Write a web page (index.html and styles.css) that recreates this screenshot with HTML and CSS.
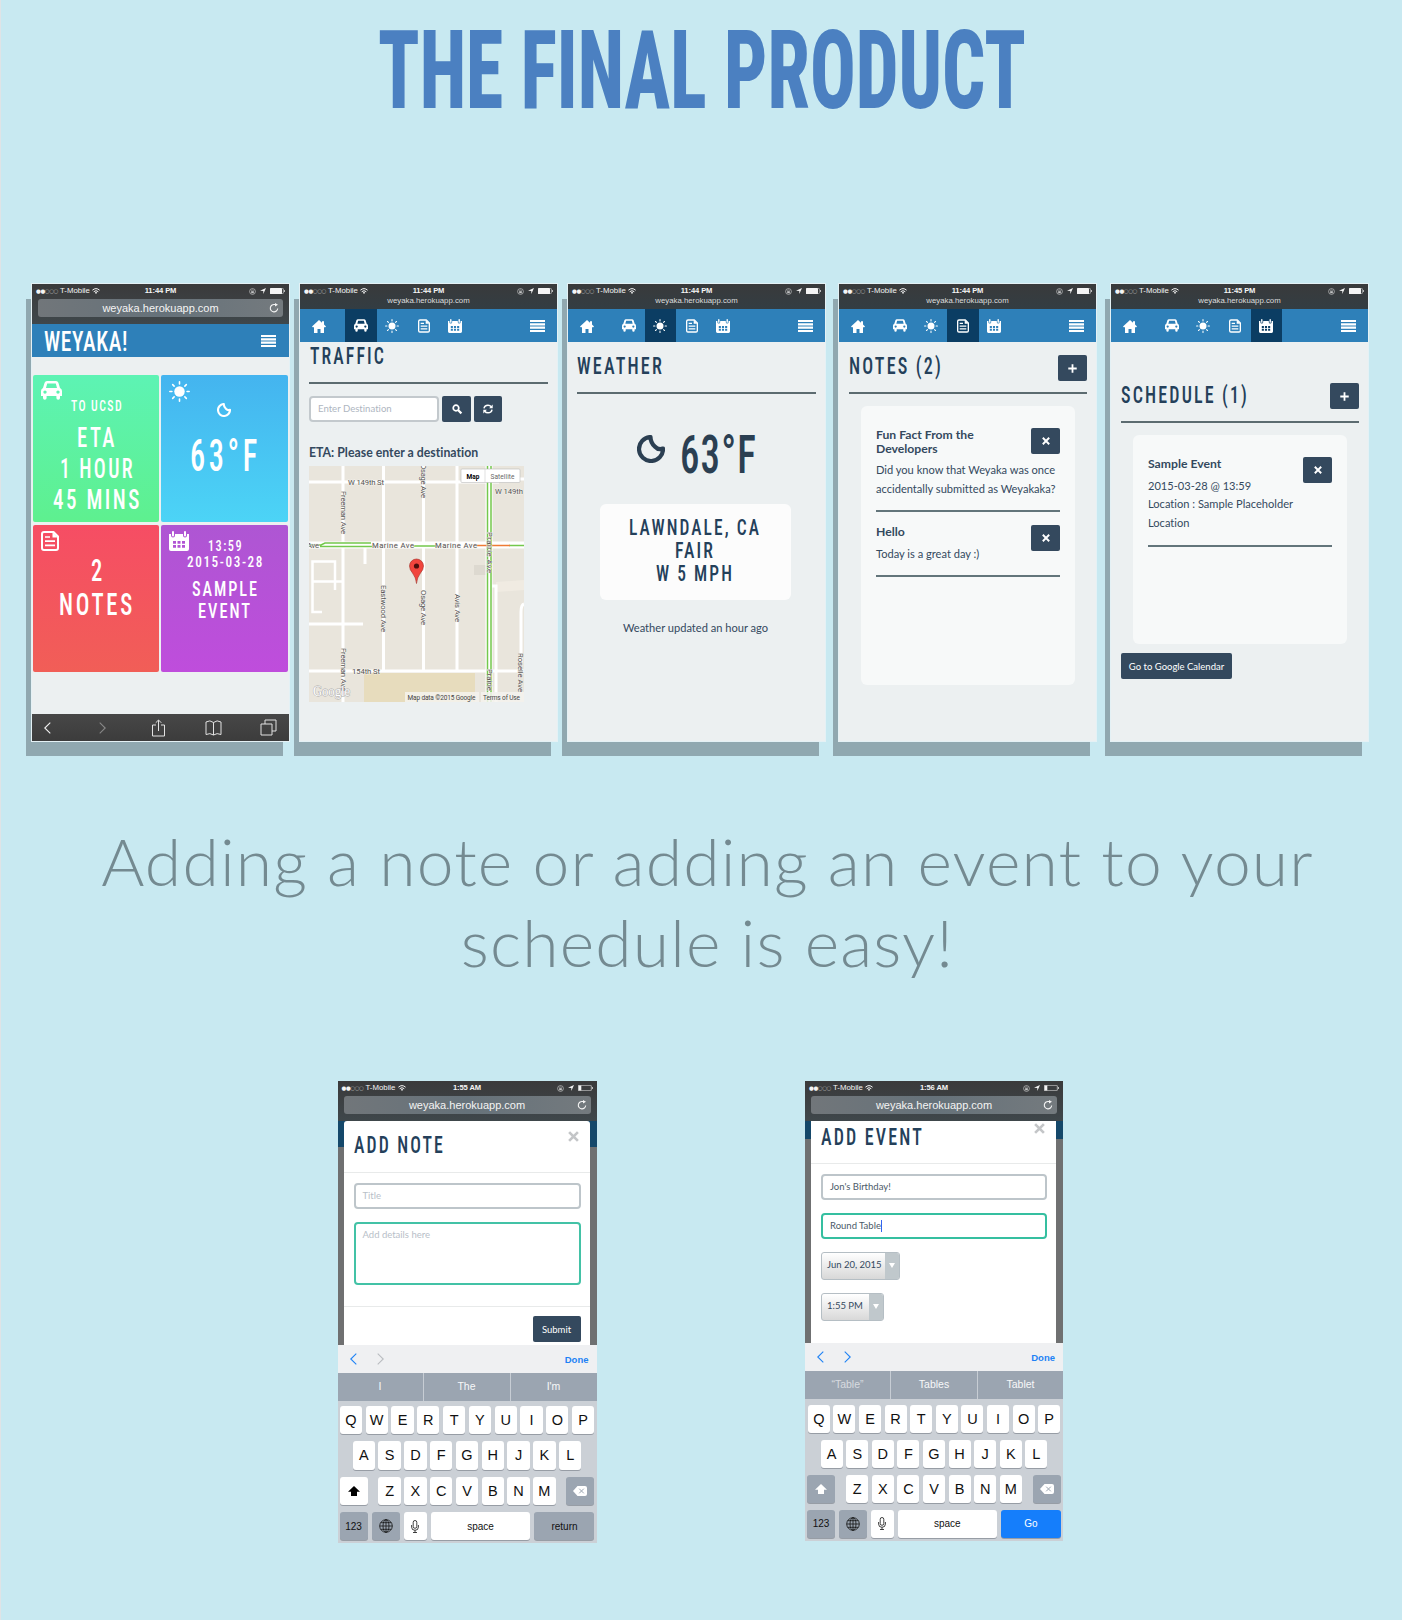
FILE: index.html
```html
<!DOCTYPE html>
<html lang="en">
<head>
<meta charset="utf-8">
<title>Weyaka – The Final Product</title>
<link rel="stylesheet" href="styles.css">
</head>
<body>
<svg class="defs" aria-hidden="true">
  <symbol id="car" viewBox="0 0 21 19"><path fill-rule="evenodd" d="M6 0h9q1.8 0 2.400 1.800L19 7q2 1 2 3v5h-2v2q0 1.800-1.800 1.800T15.400 17v-2H5.600v2q0 1.800-1.800 1.800T2 17v-2H0v-5q0-2 2-3L3.600 1.800Q4.200 0 6 0ZM6.200 2.500 5 7h11l-1.200-4.500ZM4 9.400a1.700 1.700 0 1 0 0 3.400 1.700 1.700 0 0 0 0-3.400Zm13 0a1.700 1.700 0 1 0 0 3.400 1.700 1.700 0 0 0 0-3.400Z"/></symbol>
  <symbol id="sun" viewBox="0 0 20 20"><circle cx="10" cy="10" r="5"/><path fill="none" stroke="currentColor" stroke-width="1.500" stroke-linecap="round" d="M10 .8v2M10 17.200v2M.8 10h2M17.200 10h2M3.500 3.500l1.400 1.400M15.100 15.100l1.400 1.400M3.500 16.500l1.400-1.400M15.100 4.900l1.400-1.400"/></symbol>
  <symbol id="note" viewBox="0 0 18 20"><path fill="none" stroke="currentColor" stroke-width="2" stroke-linejoin="round" d="M3 1h9.500L17 5.500V17q0 2-2 2H3q-2 0-2-2V3q0-2 2-2Z"/><path d="M11.500 1v5.500H17Z"/><path fill="none" stroke="currentColor" stroke-width="1.700" d="M4 6h5M4 10.200h10M4 14.400h10"/></symbol>
  <symbol id="cal" viewBox="0 0 20 20"><path fill-rule="evenodd" d="M0 3h2v1.500q0 2 2 2t2-2V3h8v1.500q0 2 2 2t2-2V3h2v15q0 2-2 2H2q-2 0-2-2ZM4 10v2.800h3V10Zm4.500 0v2.800h3V10ZM13 10v2.800h3V10Zm-9 4v2.800h3V14Zm4.500 0v2.800h3V14Zm4.500 0v2.800h3V14Z"/><rect x="3" width="2" height="5.500" rx="1"/><rect x="15" width="2" height="5.500" rx="1"/></symbol>
  <symbol id="home" viewBox="0 0 14 13"><path d="M7 0l3 2.700V1.300h2v3.200l2 1.900-.7.900H12V13H8.500V9h-3v4H2V7.300H.7L0 6.400Z"/></symbol>
  <symbol id="menu" viewBox="0 0 15 12"><path d="M0 0h15v2.100H0ZM0 3.300h15v2.100H0ZM0 6.600h15v2.100H0ZM0 9.900h15V12H0Z"/></symbol>
  <symbol id="moon" viewBox="0 0 28 28"><path fill="none" stroke="currentColor" stroke-width="4.200" stroke-linejoin="round" d="M13.500 2A12 12 0 1 0 26 13.500Q21.500 15.500 17.800 11.500 13.500 7.500 13.500 2Z"/></symbol>
  <symbol id="wifi" viewBox="0 0 8 6"><path d="M4 6 2.800 4.600q1.200-1 2.400 0Z"/><path fill="none" stroke="currentColor" stroke-width="1" d="M.4 2.200q3.600-3.200 7.200 0M1.700 3.700q2.300-2 4.600 0"/></symbol>
  <symbol id="lock" viewBox="0 0 7 7"><circle cx="3.500" cy="3.500" r="2.900" fill="none" stroke="currentColor" stroke-width=".7"/><path d="M2.200 3.200h2.600v2H2.200Z"/><path fill="none" stroke="currentColor" stroke-width=".5" d="M2.700 3.200V2.300q.8-.9 1.600 0v.9"/></symbol>
  <symbol id="loc" viewBox="0 0 6 6"><path d="M6 0 3.300 6V2.900L0 2.700Z"/></symbol>
  <symbol id="full" viewBox="0 0 15 6"><rect x="0" y="0" width="12" height="6" rx=".6"/><path fill="none" stroke="currentColor" stroke-width=".5" d="M12 .4h.7q.7 0 .7.700v3.800q0 .700-.7.700H12"/><path d="M14 2h.7v2H14Z"/></symbol>
  <symbol id="low" viewBox="0 0 15 6"><rect x=".3" y=".3" width="13" height="5.400" rx=".7" fill="none" stroke="currentColor" stroke-width=".6"/><rect x=".5" y=".5" width="2.800" height="5"/><path d="M14 2h.7v2H14Z"/></symbol>
  <symbol id="reload" viewBox="0 0 10 10"><path fill="none" stroke="currentColor" stroke-width="1.100" d="M8.700 5.500A3.700 3.700 0 1 1 5.500 1.500h2"/><path d="M6 0l3 1.700L6 3.500Z"/></symbol>
  <symbol id="x" viewBox="0 0 10 10"><path fill="none" stroke="currentColor" stroke-width="2.400" d="M1 1l8 8M9 1 1 9"/></symbol>
  <symbol id="plus" viewBox="0 0 10 10"><path fill="none" stroke="currentColor" stroke-width="2" d="M5 .3v9.400M.3 5h9.400"/></symbol>
  <symbol id="left" viewBox="0 0 7 12"><path fill="none" stroke="currentColor" stroke-width="1.100" d="M6.300.7.800 6l5.500 5.300"/></symbol>
  <symbol id="right" viewBox="0 0 7 12"><path fill="none" stroke="currentColor" stroke-width="1.100" d="M.7.700 6.200 6 .7 11.300"/></symbol>
  <symbol id="shift" viewBox="0 0 12 10"><path d="M6 0l6 5.700H9V10H3V5.700H0Z"/></symbol>
  <symbol id="del" viewBox="0 0 14 10"><path fill="#fff" d="M4.500 0H12q2 0 2 2v6q0 2-2 2H4.500L0 5Z"/><path fill="none" stroke="#9ba5b1" d="M6.200 2.700l4.600 4.600M10.800 2.700 6.200 7.300"/></symbol>
  <symbol id="globe" viewBox="0 0 14 14"><g fill="none" stroke="currentColor" stroke-width=".8"><circle cx="7" cy="7" r="6.300"/><ellipse cx="7" cy="7" rx="3" ry="6.300"/><path d="M7 .7v12.600M.7 7h12.600M1.700 3.700h10.600M1.700 10.300h10.600"/></g></symbol>
  <symbol id="mic" viewBox="0 0 8 13"><g fill="none" stroke="currentColor" stroke-width=".8"><rect x="2.200" y=".5" width="3.600" height="7.800" rx="1.800"/><path d="M.6 5v2q0 3.300 3.400 3.300T7.400 7V5M4 10.300v2.200M2 12.500h4"/></g></symbol>
</svg>

<h1 class="title"><svg class="cap" width="646" height="78"><text y="77.500" font-size="109" textLength="648" lengthAdjust="spacingAndGlyphs">THE FINAL PRODUCT</text></svg></h1>

<section class="phones">
  <article class="phone">
    <div class="chrome">
      <div class="status"><span class="carrier"><i>●●</i><i class="off">○○○</i> T-Mobile <svg width="8" height="6"><use href="#wifi"/></svg></span><b>11:44 PM</b><span class="right"><svg width="7" height="7"><use href="#lock"/></svg><svg width="6" height="6"><use href="#loc"/></svg><svg width="15" height="6"><use href="#full"/></svg></span></div>
      <div class="urlbar">weyaka.herokuapp.com<svg width="10" height="10"><use href="#reload"/></svg></div>
    </div>
    <header class="brand"><svg class="cap tight" width="83" height="20"><text y="20" font-size="28" textLength="84" lengthAdjust="spacingAndGlyphs">WEYAKA!</text></svg><svg width="15" height="12"><use href="#menu"/></svg></header>
    <div class="tiles">
      <div class="tile green"><svg class="corner" width="21" height="19"><use href="#car"/></svg>
        <svg class="cap" width="51" height="11"><text y="11" font-size="15" textLength="52" lengthAdjust="spacingAndGlyphs">TO UCSD</text></svg>
        <svg class="cap" width="38" height="20"><text y="20" font-size="28" textLength="40" lengthAdjust="spacingAndGlyphs">ETA</text></svg>
        <svg class="cap" width="73" height="20"><text y="20" font-size="28" textLength="75" lengthAdjust="spacingAndGlyphs">1 HOUR</text></svg>
        <svg class="cap" width="87" height="20"><text y="20" font-size="28" textLength="89" lengthAdjust="spacingAndGlyphs">45 MINS</text></svg>
      </div>
      <div class="tile blue"><svg class="corner" width="21" height="21"><use href="#sun"/></svg>
        <svg class="moon" width="14" height="14"><use href="#moon"/></svg>
        <svg class="cap" width="69" height="31"><text y="31" font-size="43.500" textLength="71" lengthAdjust="spacingAndGlyphs">63°F</text></svg>
      </div>
      <div class="tile red"><svg class="corner" width="18" height="20"><use href="#note"/></svg>
        <svg class="cap" width="11" height="22"><text y="22" font-size="31" textLength="14" lengthAdjust="spacingAndGlyphs">2</text></svg>
        <svg class="cap" width="74" height="22"><text y="22" font-size="31" textLength="76" lengthAdjust="spacingAndGlyphs">NOTES</text></svg>
      </div>
      <div class="tile purple"><svg class="corner" width="20" height="20"><use href="#cal"/></svg>
        <svg class="cap" width="33" height="11"><text y="11" font-size="15" textLength="35" lengthAdjust="spacingAndGlyphs">13:59</text></svg>
        <svg class="cap" width="75" height="11"><text y="11" font-size="15" textLength="77" lengthAdjust="spacingAndGlyphs">2015-03-28</text></svg>
        <svg class="cap" width="65" height="15"><text y="15" font-size="21" textLength="67" lengthAdjust="spacingAndGlyphs">SAMPLE</text></svg>
        <svg class="cap" width="52" height="15"><text y="15" font-size="21" textLength="54" lengthAdjust="spacingAndGlyphs">EVENT</text></svg>
      </div>
    </div>
    <footer class="toolbar"><svg width="17" height="12"><use href="#left" x="5" width="7"/></svg><svg class="dim" width="17" height="12"><use href="#right" x="5" width="7"/></svg>
      <svg width="17" height="18" viewBox="-1.500 0 17 18"><path d="M4.500 6H1v11h12V6H9.500M7 12V1.200M4.200 3.800 7 1l2.800 2.800"/></svg>
      <svg width="17" height="16" viewBox="0 0 17 16"><path d="M8.500 2.500Q5-.5 1 2v12.500q4-2 7.500.5 3.500-2.500 7.500-.5V2q-4-2.500-7.500.5V15"/></svg>
      <svg width="17" height="17" viewBox="0 0 17 17"><path d="M1 5h11v11H1ZM5 5V1h11v11h-4"/></svg></footer>
  </article>

  <article class="phone">
    <div class="chrome small">
      <div class="status"><span class="carrier"><i>●●</i><i class="off">○○○</i> T-Mobile <svg width="8" height="6"><use href="#wifi"/></svg></span><b>11:44 PM</b><span class="right"><svg width="7" height="7"><use href="#lock"/></svg><svg width="6" height="6"><use href="#loc"/></svg><svg width="15" height="6"><use href="#full"/></svg></span></div>
      <div class="url">weyaka.herokuapp.com</div>
    </div>
    <nav class="nav"><span class="first"><svg width="14" height="13"><use href="#home"/></svg></span><span class="on"><svg width="14" height="13"><use href="#car"/></svg></span><span><svg width="14" height="14"><use href="#sun"/></svg></span><span><svg width="12" height="14"><use href="#note"/></svg></span><span><svg width="14" height="14"><use href="#cal"/></svg></span><svg class="burger" width="15" height="12"><use href="#menu"/></svg></nav>
    <div class="screen traffic">
      <h2><svg class="cap" width="74" height="17"><text y="17" font-size="23.500" textLength="76" lengthAdjust="spacingAndGlyphs">TRAFFIC</text></svg></h2>
      <form class="search"><div class="field">Enter Destination</div><div class="btn"><svg width="10" height="10" viewBox="0 0 10 10"><circle cx="4" cy="4" r="2.800" fill="none" stroke="#fff" stroke-width="1.700"/><path stroke="#fff" stroke-width="2.200" d="M6 6l3.400 3.400"/></svg></div><div class="btn"><svg width="10" height="10" viewBox="0 0 10 10"><path fill="none" stroke="#fff" stroke-width="1.500" d="M1 4.400Q1.500 1.200 5 1.200q2 0 3.300 1.600M9 5.600Q8.500 8.800 5 8.800q-2 0-3.300-1.600"/><path fill="#fff" d="M9.700.6v3.600H6.100ZM.3 9.400V5.800h3.600Z"/></svg></div></form>
      <p class="eta">ETA: Please enter a destination</p>
      <svg class="map" width="215" height="236" viewBox="0 0 215 236">
        <rect width="215" height="236" fill="#e9e5dc"/>
        <rect x="55" y="207" width="111" height="29" fill="#e7dcbd"/>
        <rect x="165" y="99" width="15" height="10" fill="#ddd9d0"/>
        <path fill="#f0ebe2" d="M187 116l28-2v10l-28 2Z"/>
        <g fill="none" stroke="#fff" stroke-width="3">
          <path d="M34 0v236M74.500 0v205M114.500 0v205M148 0v205M0 16h190M0 205h215M0 158h54M56 80v18M187 236V120h-6M212 196v-50q0-7 3-8M180 13h35"/>
          <path stroke-width="2.500" d="M13 146H3.500V95.500H26V124M3.500 115.500H34"/>
          <path stroke-width="7" d="M180 0v236M0 79h215"/>
        </g>
        <g fill="none" stroke="#74c84c" stroke-width="1.500"><path d="M178.500 0v236M182 0v236M0 79h12l4-2h46M11 80.500h52M104 80h24M200 79.500h15"/><path stroke="#ee7b35" d="M167 79.500h34"/></g>
        <g class="labels">
          <text x="39" y="18.500" textLength="36">W 149th St</text><text x="186" y="27.500" textLength="28">W 149th</text>
          <text x="-2" y="81.500" textLength="12">Ave</text><text x="63" y="81.500" textLength="42">Marine Ave</text><text x="126" y="81.500" textLength="42">Marine Ave</text><text x="43" y="207.500" textLength="28">154th St</text>
          <text transform="translate(31.500 25)rotate(90)" textLength="43">Freeman Ave</text><text transform="translate(72 119)rotate(90)" textLength="47">Eastwood Ave</text><text transform="translate(111.500 -2)rotate(90)" textLength="34">Osage Ave</text><text transform="translate(111.500 124)rotate(90)" textLength="35">Osage Ave</text><text transform="translate(145.500 128)rotate(90)" textLength="28">Avis Ave</text><text transform="translate(177.500 66)rotate(90)" textLength="41">Prairie Ave</text><text transform="translate(177.500 203)rotate(90)">Prairie</text><text transform="translate(31.500 182)rotate(90)" textLength="43">Freeman Ave</text><text transform="translate(209 187)rotate(90)" textLength="39">Roselle Ave</text>
        </g>
        <text class="google" x="4" y="230" textLength="37" lengthAdjust="spacingAndGlyphs">Google</text>
        <g fill="#f5f3ef" fill-opacity=".85"><path d="M96 226h74v10H96ZM172 226h43v10h-43Z"/></g>
        <g class="tiny"><text x="98.500" y="233.500" textLength="68">Map data ©2015 Google</text><text x="174" y="233.500" textLength="37">Terms of Use</text></g>
        <rect x="152" y="3" width="59" height="13.500" rx="1" fill="#fff" stroke="#bbb" stroke-width=".6"/><path stroke="#ccc" stroke-width=".6" d="M176 3v13.500"/>
        <g class="tiny"><text x="157.500" y="12.500" font-weight="700" fill="#000" textLength="13">Map</text><text x="181.500" y="12.500" fill="#666" textLength="24">Satellite</text></g>
        <path fill="#f1453d" stroke="#a22b24" stroke-width=".6" d="M107.500 117.500q-.5-6-4-10.500-3-3.500-3-7a7 7 0 0 1 14 0q0 3.500-3 7-3.500 4.500-4 10.500Z"/><circle cx="107.500" cy="100" r="2.600" fill="#4d0f0c"/>
      </svg>
    </div>
  </article>

  <article class="phone">
    <div class="chrome small">
      <div class="status"><span class="carrier"><i>●●</i><i class="off">○○○</i> T-Mobile <svg width="8" height="6"><use href="#wifi"/></svg></span><b>11:44 PM</b><span class="right"><svg width="7" height="7"><use href="#lock"/></svg><svg width="6" height="6"><use href="#loc"/></svg><svg width="15" height="6"><use href="#full"/></svg></span></div>
      <div class="url">weyaka.herokuapp.com</div>
    </div>
    <nav class="nav"><span class="first"><svg width="14" height="13"><use href="#home"/></svg></span><span><svg width="14" height="13"><use href="#car"/></svg></span><span class="on"><svg width="14" height="14"><use href="#sun"/></svg></span><span><svg width="12" height="14"><use href="#note"/></svg></span><span><svg width="14" height="14"><use href="#cal"/></svg></span><svg class="burger" width="15" height="12"><use href="#menu"/></svg></nav>
    <div class="screen weather">
      <h2><svg class="cap" width="85" height="17"><text y="17" font-size="23.500" textLength="87" lengthAdjust="spacingAndGlyphs">WEATHER</text></svg></h2>
      <div class="temp"><svg width="28" height="28"><use href="#moon"/></svg><svg class="cap tight" width="75" height="38"><text y="38" font-size="53.500" textLength="77" lengthAdjust="spacingAndGlyphs">63°F</text></svg></div>
      <div class="place">
        <svg class="cap" width="130" height="16"><text y="16" font-size="22.500" textLength="132" lengthAdjust="spacingAndGlyphs">LAWNDALE, CA</text></svg>
        <svg class="cap" width="38" height="16"><text y="16" font-size="22.500" textLength="40" lengthAdjust="spacingAndGlyphs">FAIR</text></svg>
        <svg class="cap" width="76" height="16"><text y="16" font-size="22.500" textLength="78" lengthAdjust="spacingAndGlyphs">W 5 MPH</text></svg>
      </div>
      <p class="updated">Weather updated an hour ago</p>
    </div>
  </article>

  <article class="phone">
    <div class="chrome small">
      <div class="status"><span class="carrier"><i>●●</i><i class="off">○○○</i> T-Mobile <svg width="8" height="6"><use href="#wifi"/></svg></span><b>11:44 PM</b><span class="right"><svg width="7" height="7"><use href="#lock"/></svg><svg width="6" height="6"><use href="#loc"/></svg><svg width="15" height="6"><use href="#full"/></svg></span></div>
      <div class="url">weyaka.herokuapp.com</div>
    </div>
    <nav class="nav"><span class="first"><svg width="14" height="13"><use href="#home"/></svg></span><span><svg width="14" height="13"><use href="#car"/></svg></span><span><svg width="14" height="14"><use href="#sun"/></svg></span><span class="on"><svg width="12" height="14"><use href="#note"/></svg></span><span><svg width="14" height="14"><use href="#cal"/></svg></span><svg class="burger" width="15" height="12"><use href="#menu"/></svg></nav>
    <div class="screen notes">
      <h2><svg class="cap" width="92" height="17"><text y="17" font-size="23.500" textLength="94" lengthAdjust="spacingAndGlyphs">NOTES (2)</text></svg><span class="btn"><svg width="9" height="9"><use href="#plus"/></svg></span></h2>
      <div class="list">
        <div class="item"><div class="btn"><svg width="8" height="8"><use href="#x"/></svg></div><h3>Fun Fact From the<br>Developers</h3><p>Did you know that Weyaka was once<br>accidentally submitted as Weyakaka?</p></div>
        <div class="item"><div class="btn"><svg width="8" height="8"><use href="#x"/></svg></div><h3>Hello</h3><p>Today is a great day :)</p></div>
      </div>
    </div>
  </article>

  <article class="phone">
    <div class="chrome small">
      <div class="status"><span class="carrier"><i>●●</i><i class="off">○○○</i> T-Mobile <svg width="8" height="6"><use href="#wifi"/></svg></span><b>11:45 PM</b><span class="right"><svg width="7" height="7"><use href="#lock"/></svg><svg width="6" height="6"><use href="#loc"/></svg><svg width="15" height="6"><use href="#full"/></svg></span></div>
      <div class="url">weyaka.herokuapp.com</div>
    </div>
    <nav class="nav"><span class="first"><svg width="14" height="13"><use href="#home"/></svg></span><span><svg width="14" height="13"><use href="#car"/></svg></span><span><svg width="14" height="14"><use href="#sun"/></svg></span><span><svg width="12" height="14"><use href="#note"/></svg></span><span class="on"><svg width="14" height="14"><use href="#cal"/></svg></span><svg class="burger" width="15" height="12"><use href="#menu"/></svg></nav>
    <div class="screen schedule">
      <h2><svg class="cap" width="126" height="17"><text y="17" font-size="23.500" textLength="128" lengthAdjust="spacingAndGlyphs">SCHEDULE (1)</text></svg><span class="btn"><svg width="9" height="9"><use href="#plus"/></svg></span></h2>
      <div class="list">
        <div class="item"><div class="btn"><svg width="8" height="8"><use href="#x"/></svg></div><h3>Sample Event</h3><p>2015-03-28 @ 13:59<br>Location : Sample Placeholder<br>Location</p></div>
      </div>
      <div class="btn wide">Go to Google Calendar</div>
    </div>
  </article>
</section>

<p class="tagline">Adding a note or adding an event to your<br>schedule is easy!</p>

<section class="forms">
  <article class="device note">
    <div class="chrome">
      <div class="status"><span class="carrier"><i>●●</i><i class="off">○○○</i> T-Mobile <svg width="8" height="6"><use href="#wifi"/></svg></span><b>1:55 AM</b><span class="right"><svg width="7" height="7"><use href="#lock"/></svg><svg width="6" height="6"><use href="#loc"/></svg><svg width="15" height="6"><use href="#low"/></svg></span></div>
      <div class="urlbar">weyaka.herokuapp.com<svg width="10" height="10"><use href="#reload"/></svg></div>
    </div>
    <div class="backdrop">
      <div class="modal">
        <h2><svg class="cap" width="89" height="17"><text y="17" font-size="23.500" textLength="91" lengthAdjust="spacingAndGlyphs">ADD NOTE</text></svg><svg class="close" width="11" height="11"><use href="#x"/></svg></h2>
        <div class="body"><div class="input">Title</div><div class="input area">Add details here</div></div>
        <div class="actions"><div class="btn submit">Submit</div></div>
      </div>
    </div>
    <div class="accessory"><svg width="7" height="12"><use href="#left"/></svg><svg class="off" width="7" height="12"><use href="#right"/></svg><b>Done</b></div>
    <div class="suggest"><span>I</span><span>The</span><span>I'm</span></div>
    <div class="keys">
      <div class="row"><kbd>Q</kbd><kbd>W</kbd><kbd>E</kbd><kbd>R</kbd><kbd>T</kbd><kbd>Y</kbd><kbd>U</kbd><kbd>I</kbd><kbd>O</kbd><kbd>P</kbd></div>
      <div class="row"><kbd>A</kbd><kbd>S</kbd><kbd>D</kbd><kbd>F</kbd><kbd>G</kbd><kbd>H</kbd><kbd>J</kbd><kbd>K</kbd><kbd>L</kbd></div>
      <div class="row spread"><kbd class="mod on"><svg width="12" height="10"><use href="#shift"/></svg></kbd><div class="row"><kbd>Z</kbd><kbd>X</kbd><kbd>C</kbd><kbd>V</kbd><kbd>B</kbd><kbd>N</kbd><kbd>M</kbd></div><kbd class="mod"><svg width="14" height="10"><use href="#del"/></svg></kbd></div>
      <div class="row spread bottom"><kbd class="mod">123</kbd><kbd class="mod"><svg width="14" height="14"><use href="#globe"/></svg></kbd><kbd><svg width="8" height="13"><use href="#mic"/></svg></kbd><kbd class="space">space</kbd><kbd class="mod enter">return</kbd></div>
    </div>
  </article>

  <article class="device event">
    <div class="chrome">
      <div class="status"><span class="carrier"><i>●●</i><i class="off">○○○</i> T-Mobile <svg width="8" height="6"><use href="#wifi"/></svg></span><b>1:56 AM</b><span class="right"><svg width="7" height="7"><use href="#lock"/></svg><svg width="6" height="6"><use href="#loc"/></svg><svg width="15" height="6"><use href="#low"/></svg></span></div>
      <div class="urlbar">weyaka.herokuapp.com<svg width="10" height="10"><use href="#reload"/></svg></div>
    </div>
    <div class="backdrop">
      <div class="modal">
        <h2><svg class="cap" width="101" height="17"><text y="17" font-size="23.500" textLength="103" lengthAdjust="spacingAndGlyphs">ADD EVENT</text></svg><svg class="close" width="11" height="11"><use href="#x"/></svg></h2>
        <div class="body"><div class="input filled">Jon's Birthday!</div><div class="input filled focus">Round Table<i class="caret"></i></div>
          <div class="select date"><span>Jun 20, 2015</span><i><svg width="6" height="5"><path d="M0 0h6L3 5Z"/></svg></i></div><div class="select"><span>1:55 PM</span><i><svg width="6" height="5"><path d="M0 0h6L3 5Z"/></svg></i></div></div>
      </div>
    </div>
    <div class="accessory"><svg width="7" height="12"><use href="#left"/></svg><svg width="7" height="12"><use href="#right"/></svg><b>Done</b></div>
    <div class="suggest"><span class="faded">“Table”</span><span>Tables</span><span>Tablet</span></div>
    <div class="keys">
      <div class="row"><kbd>Q</kbd><kbd>W</kbd><kbd>E</kbd><kbd>R</kbd><kbd>T</kbd><kbd>Y</kbd><kbd>U</kbd><kbd>I</kbd><kbd>O</kbd><kbd>P</kbd></div>
      <div class="row"><kbd>A</kbd><kbd>S</kbd><kbd>D</kbd><kbd>F</kbd><kbd>G</kbd><kbd>H</kbd><kbd>J</kbd><kbd>K</kbd><kbd>L</kbd></div>
      <div class="row spread"><kbd class="mod up"><svg width="12" height="10"><use href="#shift"/></svg></kbd><div class="row"><kbd>Z</kbd><kbd>X</kbd><kbd>C</kbd><kbd>V</kbd><kbd>B</kbd><kbd>N</kbd><kbd>M</kbd></div><kbd class="mod"><svg width="14" height="10"><use href="#del"/></svg></kbd></div>
      <div class="row spread bottom"><kbd class="mod">123</kbd><kbd class="mod"><svg width="14" height="14"><use href="#globe"/></svg></kbd><kbd><svg width="8" height="13"><use href="#mic"/></svg></kbd><kbd class="space">space</kbd><kbd class="mod enter go">Go</kbd></div>
    </div>
  </article>
</section>
</body>
</html>
```
FILE: styles.css
```css
* { box-sizing: border-box; margin: 0; padding: 0; }
body { width: 1402px; height: 1620px; overflow: hidden; background: #c8e9f1; border-left: 1px solid #dfe3e6; font-family: Lato, sans-serif; font-variant-ligatures: none; color: #34495e; }
svg { display: block; flex: none; fill: currentColor; overflow: visible; }
i { font-style: normal; }
.defs { position: absolute; width: 0; height: 0; }

/* Condensed display lettering */
.cap text { font-family: Roboto, sans-serif; font-stretch: 75%; font-weight: 500; letter-spacing: .12em; fill: currentColor; }
.cap.tight text { letter-spacing: .03em; }
.title { height: 284px; padding: 30px 0 0 377px; color: #4b80c1; }
.title .cap text { font-weight: 800; letter-spacing: 0; }

/* Phone mock-ups */
.phones { display: flex; padding-left: 31px; height: 457px; }
.phone { display: flex; flex-direction: column; width: 257px; height: 457px; background: #ecf0f1; box-shadow: 0 0 0 1px #e4f1f5, -6px 15px 0 #90a8b0; margin-right: 11px; }
.phone:nth-child(3) { margin-right: 14px; }
.phone:nth-child(4) { margin-right: 15px; }
.chrome { height: 40px; background: linear-gradient(#3a3a3b, #3f474b); color: #f4f4f4; font-family: "Liberation Sans", Arial, sans-serif; }
.chrome.small { height: 25px; background: linear-gradient(#393a3b, #333d43); }
.status { display: grid; grid-template-columns: 1fr auto 1fr; align-items: center; height: 14px; padding: 0 4px; font-size: 7.800px; line-height: 14px; }
.status b { font-size: 7.600px; letter-spacing: -.1px; }
.device .status { height: 12px; line-height: 12px; }
.device .chrome { padding-top: 1px; }
.device .urlbar { margin-top: 2px; }
.carrier { display: flex; gap: 0; align-items: center; white-space: pre; }
.carrier i { font-family: "DejaVu Sans"; font-size: 5.500px; letter-spacing: -.4px; }
.carrier .off { opacity: .55; }
.status .right { display: flex; justify-content: flex-end; align-items: center; gap: 4px; }
.status .right svg:first-child { opacity: .75; }
.url { text-align: center; font-size: 7.800px; line-height: 6px; color: #ddd; }
.urlbar { display: flex; justify-content: center; align-items: center; position: relative; height: 18px; margin: 1px 6px 0; border-radius: 3px; background: linear-gradient(90deg, #71767a, #66727a 50%, #747a7e); font-size: 11px; }
.urlbar svg { position: absolute; right: 4px; top: 4px; }
.brand { display: flex; justify-content: space-between; align-items: center; height: 33px; padding: 0 13px 0 12px; background: #2e80b9; color: #fff; }
.tiles { display: grid; grid-template: 147px 147px / 126.300px 126.300px; gap: 2.500px 2px; padding: 18px 1px 0; height: 357px; color: #fff; }
.tile { position: relative; display: flex; flex-direction: column; align-items: center; border-radius: 2px; }
.corner { position: absolute; left: 8px; top: 6px; }
.green { background: linear-gradient(#5df3b4, #5ef08f); padding-top: 25px; }
.green .cap + .cap { margin-top: 11px; }
.green .cap:nth-of-type(3) { margin-top: 16px; }
.blue { background: linear-gradient(#44b4ef, #4cd4f6); padding-top: 28px; }
.blue .cap { margin-top: 23px; }
.red { background: linear-gradient(#f64d64, #f15e57); padding-top: 34px; }
.red .cap + .cap { margin-top: 12px; }
.purple { background: linear-gradient(#ae56d3, #bf4ddc); padding-top: 15px; }
.purple .cap + .cap { margin-top: 5px; }
.purple .cap:nth-of-type(4) { margin-top: 14px; }
.purple .cap:nth-of-type(5) { margin-top: 7px; }
.toolbar { display: flex; justify-content: space-between; align-items: center; height: 27px; padding: 0 12px 0 7px; background: linear-gradient(#474747, #3c3c3c); color: #f2f2f2; }
.toolbar svg { fill: none; stroke: #e2e2e2; }
.toolbar .dim { opacity: .4; }

.nav { display: flex; height: 33px; background: #2e80b9; color: #fff; }
.nav span { display: flex; align-items: center; justify-content: center; width: 31.500px; }
.nav .first { width: 45px; padding: 2px 7px 0 0; }
.nav .on { background: #0b3d63; }
.burger { margin: 11px 12px 0 auto; }

.screen { flex: 1; padding: 0 9px; }
.screen h2 { display: flex; justify-content: space-between; border-bottom: 2px solid #5c6b70; color: #24405a; }
.btn { display: flex; align-items: center; justify-content: center; width: 29px; height: 26px; border-radius: 2px; background: #34495e; color: #fff; font-size: 9.500px; }
.traffic h2 { height: 42px; padding: 5px 0 0 1px; }
.search { display: flex; gap: 3px; margin-top: 12px; }
.search .btn + .btn { width: 28px; }
.field { width: 130px; height: 26px; padding: 0 7px; border: 2px solid #c3c9cd; border-radius: 4px; background: #fff; color: #aeb6bf; font-size: 9.600px; line-height: 22px; }
.eta { margin-top: 21px; font-size: 12.300px; font-weight: 700; line-height: 20px; white-space: nowrap; }
.map { margin-top: 3px; overflow: hidden; }
.labels { font: 7.700px Roboto, sans-serif; fill: #555; stroke: #f5f2ec; stroke-width: .8px; paint-order: stroke; }
.tiny { font: 6.500px Roboto, sans-serif; fill: #444; }
.google { font: 14px "Liberation Serif", serif; fill: #fff; stroke: #aaa; stroke-width: 1px; paint-order: stroke; }

.weather h2, .notes h2 { height: 52px; padding-top: 15px; }
.temp { display: flex; gap: 15px; margin: 41px 0 0 60px; color: #2b3f52; }
.place { display: flex; flex-direction: column; align-items: center; gap: 7px; width: 191px; height: 96px; margin: 31px 0 0 23px; padding: 15px 4px 0 0; border-radius: 6px; background: #fcfcfc; color: #24405a; }
.updated { margin: 19px 0 0; padding-right: 2px; text-align: center; font-size: 11.100px; line-height: 18px; }

.notes, .schedule { padding-left: 10px; }
.notes h2 .btn { margin-top: -2px; }
.list { width: 214px; height: 279px; margin: 12px 0 0 12px; padding: 22px 15px; border-radius: 6px; background: #f7f9f9; }
.item { border-bottom: 2px solid #63757b; height: 84px; }
.item + .item { height: 65px; padding-top: 13px; }
.item .btn { float: right; }
.item h3 { font-size: 12.200px; line-height: 13.500px; }
.item p { font-size: 11.100px; line-height: 18.600px; padding-top: 6px; white-space: nowrap; }
.schedule h2 { height: 81px; padding: 44px 0 0 0; }
.schedule h2 .btn { margin-top: -3px; }
.schedule .list { height: 209px; }
.schedule .item { height: 90px; }
.schedule .item p { padding-top: 6px; }
.btn.wide { width: 111px; margin-top: 9px; }

.tagline { height: 285px; margin-top: 56px; padding: 23px 0 0 12px; text-align: center; color: #748a91; font-size: 66px; font-weight: 300; line-height: 81px; letter-spacing: 1.150px; white-space: nowrap; }

/* Form dialogs with keyboard */
.forms { display: flex; align-items: flex-start; margin-top: -1px; padding-left: 336.500px; gap: 208.500px; }
.device { display: flex; flex-direction: column; width: 259px; height: 462px; background: #cbd0d6; }
.event { width: 258px; height: 460px; }
.device .chrome { height: 40px; }
.backdrop { height: 224px; padding: 0 7px 0 6px; background: linear-gradient(#15486a 26px, #6f7071 26px); }
.event .backdrop { height: 223px; background: linear-gradient(#15486a 18px, #6f7071 18px); }
.modal { height: 100%; background: #fff; border-radius: 3px 3px 0 0; }
.event .modal { border-radius: 0; }
.modal h2 { display: flex; justify-content: space-between; height: 52px; padding: 15px 11px 0 10px; border-bottom: 1px solid #e8eaea; color: #24405a; }
.event .modal h2 { height: 43px; padding-top: 7px; }
.close { color: #c4c6c8; margin-top: -5px; }
.body { padding: 10px 9px 0 10px; }
.input { height: 26px; padding: 0 7px; border: 2px solid #bdc5ca; border-radius: 4px; font-size: 9.500px; line-height: 22px; color: #b8c0c8; }
.area { height: 63px; margin-top: 13px; border-color: #43c2a6; }
.filled { color: #4b5968; display: flex; align-items: center; }
.focus { margin-top: 13px; border-color: #35bfa0; }
.caret { width: 1px; height: 12px; background: #3464ee; }
.actions { display: flex; justify-content: flex-end; margin-top: 21px; padding: 9px 9px 0; border-top: 1px solid #e8eaea; }
.submit { width: 48px; }
.select { display: flex; width: 63px; height: 28px; margin-top: 13px; border: 1px solid #b5bec4; border-radius: 3px; background: linear-gradient(#fff, #d8d8d8); font-size: 9.500px; line-height: 23px; overflow: hidden; }
.select span { flex: 1; padding-left: 5px; white-space: nowrap; }
.select i { display: flex; align-items: center; justify-content: center; width: 14px; background: #c0c8cc; color: #fff; }
.date { width: 79px; }
.accessory { display: flex; align-items: center; gap: 20px; height: 28px; padding: 0 8px 0 12px; background: #eff0f2; color: #1e82f5; font: 9.500px "Liberation Sans", sans-serif; }
.accessory b { margin-left: auto; }
.accessory .off { color: #b9bcc0; }
.suggest { display: grid; grid-template-columns: 85px 87px 1fr; height: 28px; background: #9ba5b1; color: #f7f8f9; font: 10.500px/27px "Liberation Sans", sans-serif; text-align: center; }
.suggest span + span { border-left: 1px solid #c7cdd4; }
.faded { opacity: .65; }
.keys { display: flex; flex-direction: column; gap: 7px; padding: 5px 2px; height: 142px; }
.row { display: flex; justify-content: center; gap: 3.500px; }
.spread { justify-content: space-between; gap: 0; }
kbd { display: flex; align-items: center; justify-content: center; width: 22.300px; height: 28.300px; border-radius: 3px; background: #fff; box-shadow: 0 1px 0 #979da5; color: #111; font: 14.500px "Liberation Sans", sans-serif; }
.event .keys { gap: 6.600px; padding-top: 6px; }
.event kbd { width: 22.100px; }
.device kbd.mod { width: 28px; background: #9ba5b1; }
.device kbd.mod.on { background: #fff; color: #000; }
kbd.up { color: #fff; }
.bottom kbd { font-size: 10px; }
.device kbd.space { width: 99px; }
.device kbd.enter { width: 60px; }
.device kbd.go { background: #157efb; color: #fff; }
```
